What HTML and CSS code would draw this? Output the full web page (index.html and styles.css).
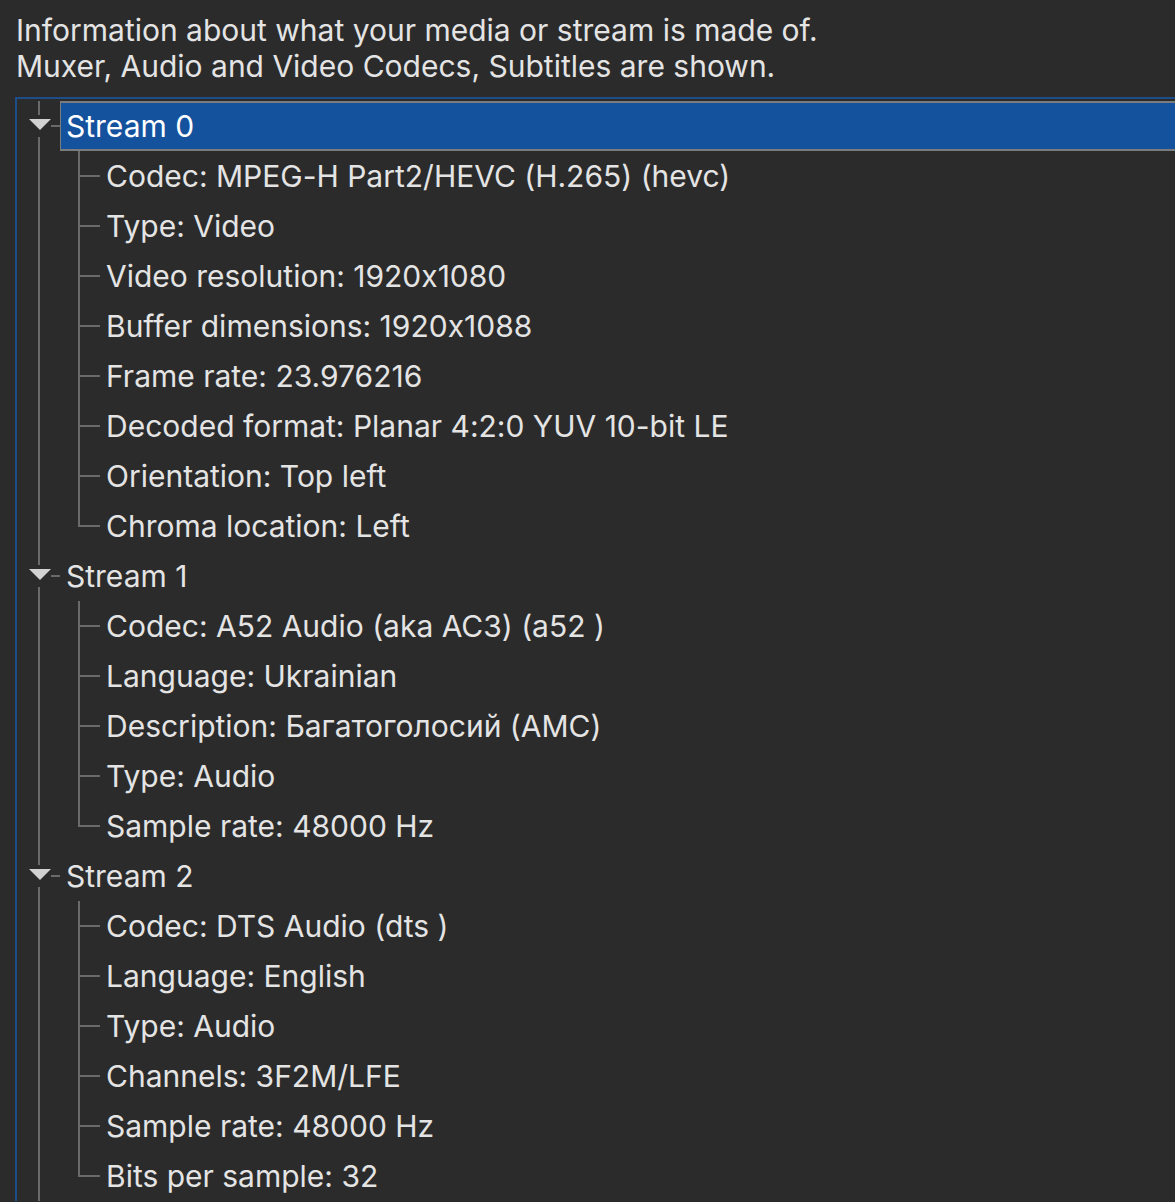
FILE: index.html
```html
<!DOCTYPE html>
<html lang="en">
<head>
<meta charset="utf-8">
<title>Codec information</title>
<link rel="stylesheet" href="styles.css">
</head>
<body>
<div class="info">
  <p class="intro">Information about what your media or stream is made of.<br>Muxer, Audio and Video Codecs, Subtitles are shown.</p>
</div>
<div class="tree">
  <div class="row stream"><span class="g1"><span class="arrow"></span></span><span class="label selected">Stream 0</span></div>
  <div class="row child"><span class="g1"></span><span class="g2"></span><span class="label">Codec: MPEG-H Part2/HEVC (H.265) (hevc)</span></div>
  <div class="row child"><span class="g1"></span><span class="g2"></span><span class="label">Type: Video</span></div>
  <div class="row child"><span class="g1"></span><span class="g2"></span><span class="label">Video resolution: 1920x1080</span></div>
  <div class="row child"><span class="g1"></span><span class="g2"></span><span class="label">Buffer dimensions: 1920x1088</span></div>
  <div class="row child"><span class="g1"></span><span class="g2"></span><span class="label">Frame rate: 23.976216</span></div>
  <div class="row child"><span class="g1"></span><span class="g2"></span><span class="label">Decoded format: Planar 4:2:0 YUV 10-bit LE</span></div>
  <div class="row child"><span class="g1"></span><span class="g2"></span><span class="label">Orientation: Top left</span></div>
  <div class="row child last"><span class="g1"></span><span class="g2"></span><span class="label">Chroma location: Left</span></div>

  <div class="row stream"><span class="g1"><span class="arrow"></span></span><span class="label">Stream 1</span></div>
  <div class="row child"><span class="g1"></span><span class="g2"></span><span class="label">Codec: A52 Audio (aka AC3) (a52 )</span></div>
  <div class="row child"><span class="g1"></span><span class="g2"></span><span class="label">Language: Ukrainian</span></div>
  <div class="row child"><span class="g1"></span><span class="g2"></span><span class="label">Description: Багатоголосий (AMC)</span></div>
  <div class="row child"><span class="g1"></span><span class="g2"></span><span class="label">Type: Audio</span></div>
  <div class="row child last"><span class="g1"></span><span class="g2"></span><span class="label">Sample rate: 48000 Hz</span></div>

  <div class="row stream"><span class="g1"><span class="arrow"></span></span><span class="label">Stream 2</span></div>
  <div class="row child"><span class="g1"></span><span class="g2"></span><span class="label">Codec: DTS Audio (dts )</span></div>
  <div class="row child"><span class="g1"></span><span class="g2"></span><span class="label">Language: English</span></div>
  <div class="row child"><span class="g1"></span><span class="g2"></span><span class="label">Type: Audio</span></div>
  <div class="row child"><span class="g1"></span><span class="g2"></span><span class="label">Channels: 3F2M/LFE</span></div>
  <div class="row child"><span class="g1"></span><span class="g2"></span><span class="label">Sample rate: 48000 Hz</span></div>
  <div class="row child last"><span class="g1"></span><span class="g2"></span><span class="label">Bits per sample: 32</span></div>
</div>
</body>
</html>
```
FILE: styles.css
```css
html, body {
  margin: 0;
  padding: 0;
  background: #2b2b2b;
  overflow: hidden;
}
body {
  font-family: Inter, "Noto Sans", "DejaVu Sans", sans-serif;
  font-feature-settings: "calt" 0;
  color: #e4e4e4;
}
.info {
  padding: 12px 0 0 16px;
}
.intro {
  margin: 0;
  font-size: 30px;
  line-height: 36px;
}
.tree {
  margin: 13px -20px 0 15px;
  border-left: 2px solid #1d4e8a;
  border-top: 2px solid #1d4e8a;
  padding-top: 2px;
  font-size: 30px;
}
.row {
  display: flex;
  height: 50px;
}
.g1 {
  flex: 0 0 43px;
  height: 50px;
  box-sizing: border-box;
}
.g2 {
  flex: 0 0 40px;
  height: 50px;
}
.stream .g1 {
  padding: 18px 0 0 12px;
  background:
    linear-gradient(#6a6a6a, #6a6a6a) 21px 0 / 2px 14px no-repeat,
    linear-gradient(#6a6a6a, #6a6a6a) 21px 36px / 2px 14px no-repeat,
    linear-gradient(#6a6a6a, #6a6a6a) 34px 24px / 9px 2px no-repeat;
}
.arrow {
  display: block;
  width: 0;
  height: 0;
  border-left: 11px solid transparent;
  border-right: 11px solid transparent;
  border-top: 11px solid #d2d2d2;
}
.child .g1 {
  background: linear-gradient(#6a6a6a, #6a6a6a) 21px 0 / 2px 100% no-repeat;
}
.child .g2 {
  background:
    linear-gradient(#6a6a6a, #6a6a6a) 18px 0 / 2px 100% no-repeat,
    linear-gradient(#6a6a6a, #6a6a6a) 20px 24px / 20px 2px no-repeat;
}
.child.last .g2 {
  background:
    linear-gradient(#6a6a6a, #6a6a6a) 18px 0 / 2px 26px no-repeat,
    linear-gradient(#6a6a6a, #6a6a6a) 20px 24px / 20px 2px no-repeat;
}
.label {
  flex: 1 1 auto;
  line-height: 50px;
  white-space: nowrap;
}
.stream .label {
  padding-left: 6px;
}
.child .label {
  padding-left: 6px;
}
.label.selected {
  box-sizing: border-box;
  height: 50px;
  line-height: 46px;
  padding-left: 5px;
  background: #15529e;
  border: 1px solid #7c7c7c;
  border-top-width: 2px;
  border-bottom-width: 2px;
  color: #ffffff;
}
```
